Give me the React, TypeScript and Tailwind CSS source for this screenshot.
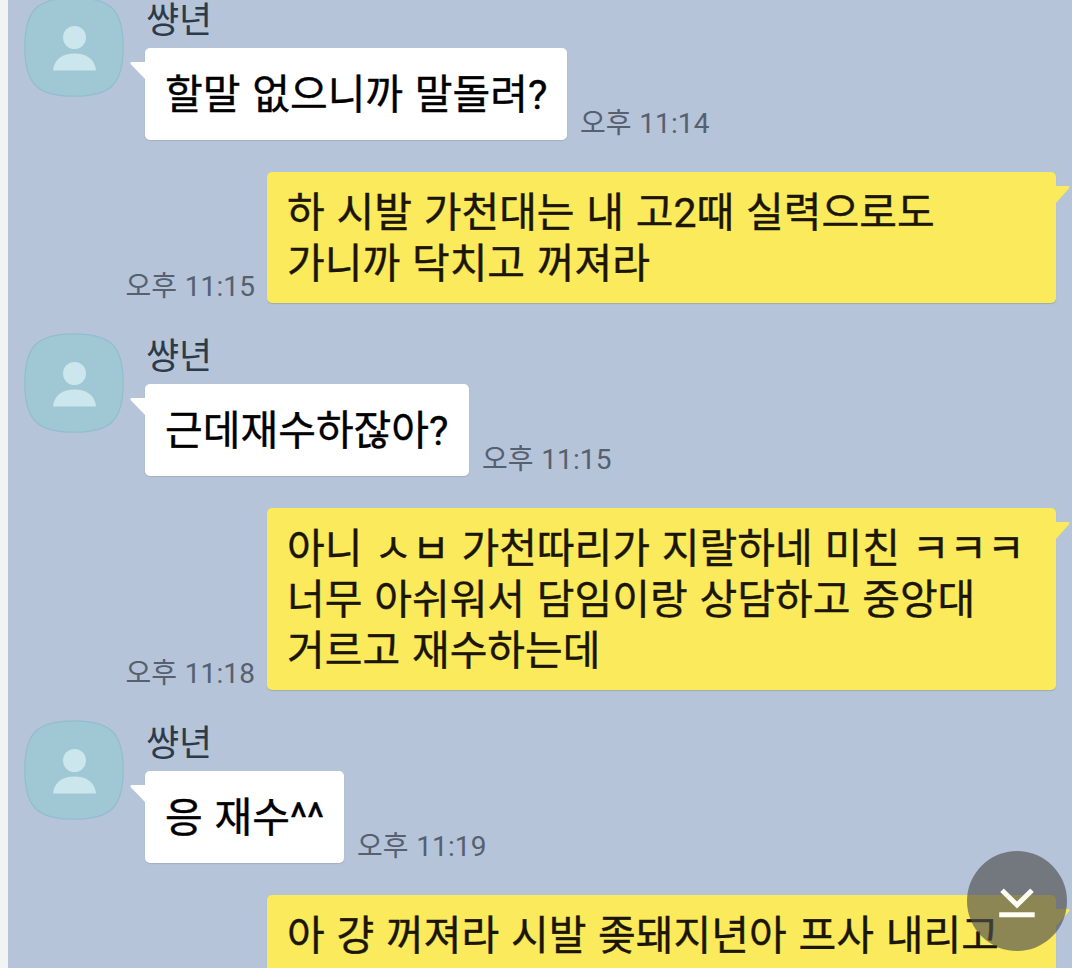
import type { ReactNode } from 'react';

interface Message {
  id: number;
  mine: boolean;
  time?: string;
  lines: string[];
  rowClass: string;
  bubbleClass: string;
}

const FRIEND_NAME = '썅년';

const MESSAGES: Message[] = [
  { id: 1, mine: false, time: '오후 11:14', lines: ['할말 없으니까 말돌려?'], rowClass: 'h-[143px]', bubbleClass: 'w-[422px]' },
  { id: 2, mine: true, time: '오후 11:15', lines: ['하 시발 가천대는 내 고2때 실력으로도', '가니까 닥치고 꺼져라'], rowClass: 'mt-8', bubbleClass: 'h-[131px]' },
  { id: 3, mine: false, time: '오후 11:15', lines: ['근데재수하잖아?'], rowClass: 'mt-[30px] h-[143px]', bubbleClass: 'w-[324px]' },
  { id: 4, mine: true, time: '오후 11:18', lines: ['아니 ㅅㅂ 가천따리가 지랄하네 미친 ㅋㅋㅋ', '너무 아쉬워서 담임이랑 상담하고 중앙대', '거르고 재수하는데'], rowClass: 'mt-8', bubbleClass: 'h-[182px]' },
  { id: 5, mine: false, time: '오후 11:19', lines: ['응 재수^^'], rowClass: 'mt-[30px] h-[143px]', bubbleClass: 'w-[199px]' },
  { id: 6, mine: true, lines: ['아 걍 꺼져라 시발 좆돼지년아 프사 내리고'], rowClass: 'mt-8', bubbleClass: 'h-[131px]' },
];

function Avatar() {
  return (
    <svg className="h-[100px] w-[100px] shrink-0" viewBox="0 0 100 100">
      <path
        d="M50 .8C87 .8 99.2 13 99.2 50S87 99.2 50 99.2.8 87 .8 50 13 .8 50 .8Z"
        fill="#9fc8d4"
        stroke="#94bdcb"
        strokeWidth="1.2"
      />
      <circle cx="50.5" cy="40.5" r="11.5" fill="#cbe6ec" />
      <path d="M29 73.500C30 62 39 56.500 50.500 56.500S71 62 72 73.500Z" fill="#cbe6ec" />
    </svg>
  );
}

function Time({ children }: { children: ReactNode }) {
  return (
    <span className="whitespace-nowrap text-[28px] leading-8 tracking-[0.1px] text-[#56606f] [word-spacing:0.5px]">
      {children}
    </span>
  );
}

function FriendMessage({ message }: { message: Message }) {
  return (
    <div className={`flex items-start pl-4 ${message.rowClass}`}>
      <Avatar />
      <div className="ml-[21px]">
        <div className="h-[51px] pl-px text-[36px] leading-[49px] text-[#2d3a4a]">{FRIEND_NAME}</div>
        <div className="flex items-end">
          <div className={`relative flex h-[92px] shrink-0 items-center whitespace-nowrap rounded-[5px] bg-white pl-5 pt-[3px] text-black shadow-[0_1px_1px_rgba(90,105,130,0.2)] [-webkit-text-stroke:0.4px] ${message.bubbleClass}`}>
            <svg className="absolute -left-[15px] top-[14px] h-[18px] w-4" viewBox="0 0 16 18">
              <path d="M16 0H1.500Q-.5 .5 1 2.500L16 18Z" fill="#fff" />
            </svg>
            {message.lines[0]}
          </div>
          <div className="ml-[13px] flex">
            <Time>{message.time}</Time>
          </div>
        </div>
      </div>
    </div>
  );
}

function MyMessage({ message }: { message: Message }) {
  return (
    <div className={`flex items-end justify-end pr-4 ${message.rowClass}`}>
      {message.time && (
        <div className="mr-3 flex">
          <Time>{message.time}</Time>
        </div>
      )}
      <div className={`relative w-[789px] shrink-0 whitespace-nowrap rounded-[5px] bg-[#faea5c] pl-5 pt-4 text-[#1a1505] shadow-[0_1px_1px_rgba(110,115,90,0.3)] [-webkit-text-stroke:0.4px] ${message.bubbleClass}`}>
        <svg className="absolute -right-[14px] top-[14px] h-[18px] w-[15px]" viewBox="0 0 15 18">
          <path d="M0 0H13.500Q15.500 .5 14 2.500L0 18Z" fill="#faea5c" />
        </svg>
        {message.lines.map(line => (
          <div key={line}>{line}</div>
        ))}
      </div>
    </div>
  );
}

export default function App() {
  return (
    <main className="relative h-[968px] w-[1072px] overflow-hidden bg-[#f3f3f3] pl-2 font-[Roboto,'Noto_Sans_CJK_KR',sans-serif] text-[41px] leading-[51px] [word-spacing:1.6px]">
      <div className="h-full overflow-hidden bg-[#b5c4d8]">
        <div className="-mt-[3px]">
          {MESSAGES.map(m => (m.mine ? <MyMessage key={m.id} message={m} /> : <FriendMessage key={m.id} message={m} />))}
        </div>
      </div>

      {/* Scroll to latest */}
      <button aria-label="맨 아래로" className="absolute left-[967px] top-[851px] flex h-[100px] w-[100px] items-center justify-center rounded-full bg-[#505050]/65">
        <svg className="h-9 w-9" viewBox="0 0 36 36" fill="none" stroke="#fffef5" strokeWidth="5">
          <path d="M3 7.200 18 22 33 7.200M.2 31.700h35.500" />
        </svg>
      </button>
    </main>
  );
}
